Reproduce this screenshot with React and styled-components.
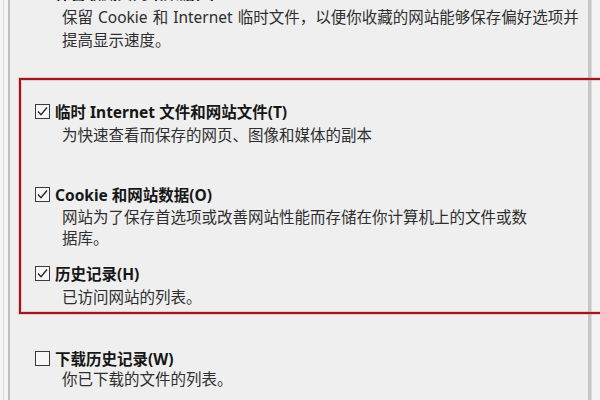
import React from "react";
import styled, { createGlobalStyle } from "styled-components";

const GlobalStyle = createGlobalStyle`
	html, body {
		margin: 0;
		padding: 0;
		background: #efefef;
	}
	body {
		font-family: "Noto Sans", "Noto Sans CJK SC", sans-serif;
	}
`;

const Frame = styled.div`
	display: flex;
	width: 600px;
	height: 400px;
	overflow: hidden;
	background: #efefef;
`;

const LeftEdge = styled.div`
	width: 8px;
	flex-shrink: 0;
	border-right: 2px solid #bebebe;
	background: linear-gradient(to right, #f4f4f4 0 3px, #d8d8d8 3px 4px, #f4f4f4 4px);
`;

const RightEdge = styled.div`
	width: 9px;
	flex-shrink: 0;
	background: linear-gradient(to right, #dcdcdc 0 1px, #f3f3f3 1px);
`;

const Content = styled.div`
	flex: 1;
	border-right: 3px solid #c6c6c6;
`;

// scrolled list: the first option sits partly above the top edge
const List = styled.div`
	margin-top: -19px;
`;

const Group = styled.div`
	padding-left: 25px;
	margin-top: ${(p) => p.$top || 0}px;
`;

const Highlight = styled.div`
	position: relative;
	z-index: 1;
	margin: 26px -14px 0 9px;
	padding: 20px 0 4px 14px;
	border: 2px solid #9a1a20;
	border-right: none;
	box-shadow: 0 0 0 1px rgba(236, 140, 140, 0.4),
		inset 0 0 0 1px rgba(236, 140, 140, 0.4);
`;

const Item = styled.div`
	margin-top: ${(p) => p.$top || 0}px;
`;

const Row = styled.div`
	display: flex;
	align-items: center;
	height: 22px;
`;

const Box = styled.svg`
	width: 15px;
	height: 15px;
	flex-shrink: 0;
`;

const Label = styled.span`
	margin-left: 5px;
	font-size: 15.5px;
	font-weight: 700;
	color: #161616;
	white-space: nowrap;
`;

const Desc = styled.div`
	padding-left: 27px;
	margin-top: ${(p) => (p.$top === undefined ? 2 : p.$top)}px;
	font-size: 15.5px;
	line-height: ${(p) => p.$lh || 22}px;
	word-spacing: 1px;
	color: #2e2e2e;
	white-space: nowrap;
`;

const Check = ({ checked }) => (
	<Box viewBox="0 0 15 15">
		<rect x="0.5" y="0.5" width="14" height="14" fill="#f7f7f7" stroke="#3a3a3a" strokeWidth="1" />
		{checked && (
			<polyline
				points="3,7.5 6,10.8 12,3.5"
				fill="none"
				stroke="#2a2a2a"
				strokeWidth="1.4"
			/>
		)}
	</Box>
);

const Option = ({ label, lines, checked, top, descTop, lh }) => (
	<Item $top={top}>
		<Row>
			<Check checked={checked} />
			<Label>{label}</Label>
		</Row>
		<Desc $top={descTop} $lh={lh}>
			{lines.map((line) => (
				<div key={line}>{line}</div>
			))}
		</Desc>
	</Item>
);

export default function App() {
	return (
		<>
			<GlobalStyle />
			<Frame>
				<LeftEdge />
				<Content>
					<List>
						<Group>
							<Option
								checked
								label="保留收藏夹网站数据(R)"
								lines={[
									"保留 Cookie 和 Internet 临时文件，以便你收藏的网站能够保存偏好选项并",
									"提高显示速度。",
								]}
								descTop={3}
								lh={23}
							/>
						</Group>
						<Highlight>
							<Option
								checked
								label="临时 Internet 文件和网站文件(T)"
								lines={["为快速查看而保存的网页、图像和媒体的副本"]}
							/>
							<Option
								checked
								top={37}
								label="Cookie 和网站数据(O)"
								lines={[
									"网站为了保存首选项或改善网站性能而存储在你计算机上的文件或数",
									"据库。",
								]}
								lh={21}
							/>
							<Option
								checked
								top={13}
								label="历史记录(H)"
								lines={["已访问网站的列表。"]}
							/>
						</Highlight>
						<Group $top={33}>
							<Option
								label="下载历史记录(W)"
								lines={["你已下载的文件的列表。"]}
								descTop={0}
								lh={20}
							/>
						</Group>
					</List>
				</Content>
				<RightEdge />
			</Frame>
		</>
	);
}
